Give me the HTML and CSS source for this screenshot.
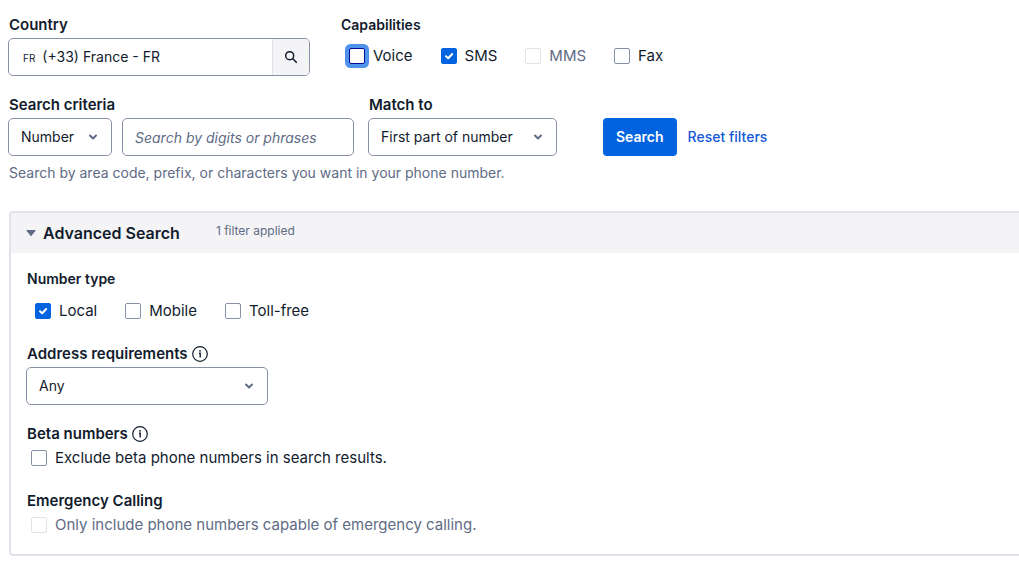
FILE: index.html
```html
<!DOCTYPE html>
<html lang="en">
<head>
<meta charset="utf-8">
<meta name="viewport" content="width=device-width, initial-scale=1">
<title>Search phone numbers</title>
<link rel="stylesheet" href="styles.css">
</head>
<body>
<svg class="sprite" aria-hidden="true">
  <symbol id="chevron" viewBox="0 0 10 10"><path d="M2 3.500 5 6.500 8 3.500" fill="none" stroke="currentColor" stroke-width="2" stroke-linecap="round" stroke-linejoin="round"/></symbol>
  <symbol id="info" viewBox="0 0 16 16"><circle cx="8" cy="8" r="7.300" fill="none" stroke="currentColor" stroke-width="1.200"/><circle cx="8" cy="4.800" r="0.900" fill="currentColor"/><path d="M7 7.300H8.200V11.500" fill="none" stroke="currentColor" stroke-width="1.400"/></symbol>
</svg>
<form class="search">
  <div class="row">
    <div class="field country">
      <label class="label" for="country">Country</label>
      <div class="combo">
        <span class="prefix">FR</span>
        <input class="combo-input" id="country" type="text" value="(+33) France - FR">
        <button class="combo-button" type="button" aria-label="Search countries">
          <svg class="magnifier" viewBox="0 0 14 14"><circle cx="5.700" cy="5.700" r="4" fill="none" stroke="currentColor" stroke-width="1.500"/><path d="M8.800 8.800 12.300 12.300" stroke="currentColor" stroke-width="1.600" stroke-linecap="round"/></svg>
        </button>
      </div>
    </div>
    <fieldset class="group capabilities">
      <legend class="label compact">Capabilities</legend>
      <div class="checks">
        <label class="check"><input class="box focused" type="checkbox">Voice</label>
        <label class="check"><input class="box" type="checkbox" checked>SMS</label>
        <label class="check disabled"><input class="box" type="checkbox" disabled>MMS</label>
        <label class="check"><input class="box" type="checkbox">Fax</label>
      </div>
    </fieldset>
  </div>

  <div class="row criteria-row">
    <div class="field">
      <label class="label" for="criteria">Search criteria</label>
      <div class="criteria">
        <div class="select criteria-select">
          <select id="criteria"><option>Number</option><option>Location</option></select>
          <svg class="chevron"><use href="#chevron"/></svg>
        </div>
        <input class="text" type="text" placeholder="Search by digits or phrases" aria-label="Digits or phrases">
      </div>
    </div>
    <div class="field">
      <label class="label" for="match">Match to</label>
      <div class="select match-select">
        <select id="match"><option>First part of number</option><option>Anywhere in number</option></select>
        <svg class="chevron"><use href="#chevron"/></svg>
      </div>
    </div>
    <div class="actions">
      <button class="primary" type="button">Search</button>
      <button class="link" type="button">Reset filters</button>
    </div>
  </div>
  <p class="help">Search by area code, prefix, or characters you want in your phone number.</p>

  <section class="panel">
    <header class="panel-head">
      <button class="toggle" type="button" aria-expanded="true">
        <svg class="caret" viewBox="0 0 10 6"><path d="M0.800 0.500H9.200L5 5.800Z" fill="#606b85" stroke="#606b85" stroke-linejoin="round"/></svg>
        Advanced Search
      </button>
      <span class="applied">1 filter applied</span>
    </header>
    <div class="panel-body">
      <fieldset class="group number-type">
        <legend class="label compact">Number type</legend>
        <div class="checks">
          <label class="check"><input class="box" type="checkbox" checked>Local</label>
          <label class="check"><input class="box" type="checkbox">Mobile</label>
          <label class="check"><input class="box" type="checkbox">Toll-free</label>
        </div>
      </fieldset>
      <div class="field">
        <label class="label" for="address">Address requirements <svg class="info"><use href="#info"/></svg></label>
        <div class="select address-select">
          <select id="address"><option>Any</option><option>None</option></select>
          <svg class="chevron"><use href="#chevron"/></svg>
        </div>
      </div>
      <fieldset class="group single">
        <legend class="label">Beta numbers <svg class="info"><use href="#info"/></svg></legend>
        <label class="check"><input class="box" type="checkbox">Exclude beta phone numbers in search results.</label>
      </fieldset>
      <fieldset class="group single emergency">
        <legend class="label">Emergency Calling</legend>
        <label class="check disabled"><input class="box" type="checkbox" disabled>Only include phone numbers capable of emergency calling.</label>
      </fieldset>
    </div>
  </section>
</form>
</body>
</html>
```
FILE: styles.css
```css
* { box-sizing: border-box; }

body {
  margin: 0;
  padding: 15px 0 8px 8px;
  background: #fff;
  color: #121c2d;
  font: 14px/20px Inter, "Liberation Sans", sans-serif;
}

.sprite { display: none; }

input, select, button { font: inherit; color: inherit; }
button { cursor: pointer; }

.row { display: flex; align-items: flex-start; }
.criteria-row { margin-top: 19px; align-items: flex-end; gap: 14px; }

.field { display: flex; flex-direction: column; gap: 3px; }
.country { width: 302px; }

.label {
  display: flex;
  align-items: center;
  gap: 4px;
  padding: 0 0 0 1px;
  font-size: 15px;
  font-weight: 600;
}
.compact { font-size: 14px; }

.combo {
  display: flex;
  align-items: center;
  height: 38px;
  border: 1px solid #8891aa;
  border-radius: 5px;
  overflow: hidden;
}
.prefix { padding: 2px 0 0 14px; font-size: 10px; }
.combo-input { flex: 1; min-width: 0; padding: 0 7px; border: 0; outline: 0; }
.combo-button {
  display: grid;
  place-items: center;
  width: 37px;
  height: 100%;
  padding: 0;
  border: 0;
  border-left: 1px solid #e1e3ea;
  background: #f4f4f6;
}
.magnifier { width: 14px; height: 14px; }

.group { min-width: 0; margin: 0; padding: 0; border: 0; }
.capabilities { margin-left: 31px; }
.capabilities .label { padding: 0; }

.checks { display: flex; gap: 28px; padding: 12px 0 0 8px; }
.capabilities .checks { padding-top: 11px; }
.check { display: flex; align-items: center; gap: 8px; font-size: 15px; }
.disabled { color: #606b85; }

.box {
  appearance: none;
  flex: none;
  width: 16px;
  height: 16px;
  margin: 0;
  border: 1px solid #8891aa;
  border-radius: 2px;
  background: #fff;
}
.box:checked {
  border-color: #0263e0;
  background: #0263e0 url("data:image/svg+xml,%3Csvg xmlns='http://www.w3.org/2000/svg' viewBox='0 0 14 14'%3E%3Cpath d='M4 7.200 6.200 9.300 10.200 5' fill='none' stroke='white' stroke-width='2' stroke-linecap='round' stroke-linejoin='round'/%3E%3C/svg%3E") center / 14px 14px no-repeat;
}
.box:disabled { border-color: #e1e3ea; }
.focused { border-color: #030b9c; box-shadow: 0 0 0 4px #4e92e9; }

.select { display: grid; align-items: center; }
.select select, .select .chevron { grid-area: 1 / 1; }
.select select {
  appearance: none;
  width: 100%;
  height: 38px;
  padding: 0 30px 0 12px;
  border: 1px solid #8891aa;
  border-radius: 5px;
  background: #fff;
}
.chevron {
  justify-self: end;
  width: 10px;
  height: 10px;
  margin-right: 14px;
  color: #606b85;
  pointer-events: none;
}
.criteria { display: flex; gap: 10px; }
.criteria-select { width: 104px; }
.match-select { width: 189px; }
.address-select { width: 242px; margin-left: -1px; }

.text {
  width: 232px;
  height: 38px;
  padding: 0 12px;
  border: 1px solid #8891aa;
  border-radius: 5px;
}
.text::placeholder { color: #606b85; font-style: italic; opacity: 1; }

.actions { display: flex; align-items: center; gap: 11px; margin-left: 32px; }
.primary {
  height: 38px;
  padding: 0 13px;
  border: 0;
  border-radius: 4px;
  background: #0263e0;
  color: #fff;
  font-weight: 600;
}
.link { padding: 0; border: 0; background: none; color: #1659d8; font-weight: 500; }

.help { margin: 7px 0 0; padding-left: 1px; color: #606b85; }

.panel {
  margin: 28px 0 0 1px;
  border: 2px solid #e1e3ea;
  border-right: 0;
  border-radius: 4px 0 0 4px;
}
.panel-head {
  display: flex;
  align-items: center;
  gap: 36px;
  height: 40px;
  padding: 0 15px;
  background: #f4f4f6;
}
.toggle {
  display: flex;
  align-items: center;
  gap: 7px;
  padding: 0;
  border: 0;
  background: none;
  font-size: 16px;
  font-weight: 600;
}
.caret { width: 10px; height: 6px; }
.applied { padding-bottom: 4px; color: #606b85; font-size: 12px; }

.panel-body { padding: 16px 16px 19px; }
.panel-body .label { padding: 0; }
.number-type { margin-bottom: 23px; }
.info { width: 16px; height: 16px; }
.single { margin-top: 19px; }
.emergency { margin-top: 23px; }
.single .check { padding: 4px 0 0 4px; }
```
